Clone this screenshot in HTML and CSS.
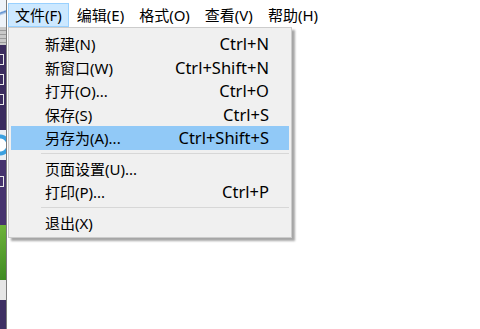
FILE: index.html
```html
<!DOCTYPE html>
<html lang="zh-CN">
<head>
    <meta charset="UTF-8">
    <title>记事本</title>
    <link rel="stylesheet" href="styles.css">
</head>
<body>
    <div class="desktop">
        <div class="strip sky"></div>
        <div class="strip bar"></div>
        <div class="strip dusk"><i></i><i></i><i></i></div>
        <div class="strip icon"></div>
        <div class="strip dusk tall"><i></i></div>
        <div class="strip grass"></div>
        <div class="strip box"></div>
        <div class="strip dusk rest"></div>
    </div>
    <div class="window">
        <div class="menubar">
            <div class="menu-item open">文件(F)</div>
            <div class="menu-item">编辑(E)</div>
            <div class="menu-item">格式(O)</div>
            <div class="menu-item">查看(V)</div>
            <div class="menu-item">帮助(H)</div>
        </div>
        <div class="dropdown">
            <div class="row"><span>新建(N)</span><span class="key">Ctrl+N</span></div>
            <div class="row"><span>新窗口(W)</span><span class="key">Ctrl+Shift+N</span></div>
            <div class="row"><span>打开(O)...</span><span class="key">Ctrl+O</span></div>
            <div class="row"><span>保存(S)</span><span class="key">Ctrl+S</span></div>
            <div class="row active"><span>另存为(A)...</span><span class="key">Ctrl+Shift+S</span></div>
            <div class="sep"></div>
            <div class="row"><span>页面设置(U)...</span></div>
            <div class="row"><span>打印(P)...</span><span class="key">Ctrl+P</span></div>
            <div class="sep"></div>
            <div class="row"><span>退出(X)</span></div>
        </div>
    </div>
</body>
</html>
```

FILE: styles.css
```css
body {
    margin: 0;
    height: 329px;
    display: flex;
    overflow: hidden;
    font-family: "Noto Sans", "Noto Sans CJK SC", sans-serif;
    font-size: 15px;
    color: #000;
    background: #fff;
}
.desktop {
    width: 6px;
    display: flex;
    flex-direction: column;
    border-right: 1px solid #7c7c7c;
    overflow: hidden;
}
.strip { flex: none; }
.sky {
    height: 27px;
    background: linear-gradient(160deg, #eef3f9 40%, #5b8fd0 45%, #eef3f9 55%);
}
.bar {
    height: 18px;
    background: repeating-linear-gradient(#c9c9c9 0 3px, #9a9a9a 3px 4px);
}
.dusk {
    height: 85px;
    background: #3b2c5e;
    display: flex;
    flex-direction: column;
    gap: 9px;
    padding-top: 9px;
    box-sizing: border-box;
}
.dusk i {
    display: block;
    width: 4px;
    height: 11px;
    border: 1px solid #e8e8e8;
    border-left: none;
    box-sizing: border-box;
}
.icon {
    height: 30px;
    background: radial-gradient(circle at 0 50%, #fff 6px, #3aa0e0 7px 10px, #e9eef3 11px);
}
.tall { height: 65px; background: #46336e; padding-top: 16px; }
.grass { height: 55px; background: linear-gradient(150deg, #6fb43a, #3d8a22); }
.box { height: 20px; background: #e6e6e6; }
.rest { height: 29px; background: #3e2f63; }

.window {
    flex: 1;
    position: relative;
}
.menubar {
    display: flex;
    padding: 3px 0 0 1px;
    height: 24px;
}
.menu-item {
    padding: 0 6px;
    line-height: 22px;
    border: 1px solid transparent;
    margin-right: 1px;
}
.menu-item.open {
    background: #cce8ff;
    border-color: #99d1ff;
}
.dropdown {
    position: absolute;
    left: 1px;
    top: 27px;
    width: 278px;
    padding: 4px 2px 3px;
    background: #f0f0f0;
    border: 1px solid #cccccc;
    box-shadow: 3px 3px 2px rgba(0, 0, 0, 0.35);
}
.row {
    height: 23.5px;
    display: flex;
    align-items: center;
    justify-content: space-between;
    padding: 0 20px 0 34px;
}
.row .key { font-size: 16.5px; }
.row.active { background: #91c9f7; }
.sep {
    height: 1px;
    background: #d7d7d7;
    margin: 3px 0 3px 30px;
}
```
